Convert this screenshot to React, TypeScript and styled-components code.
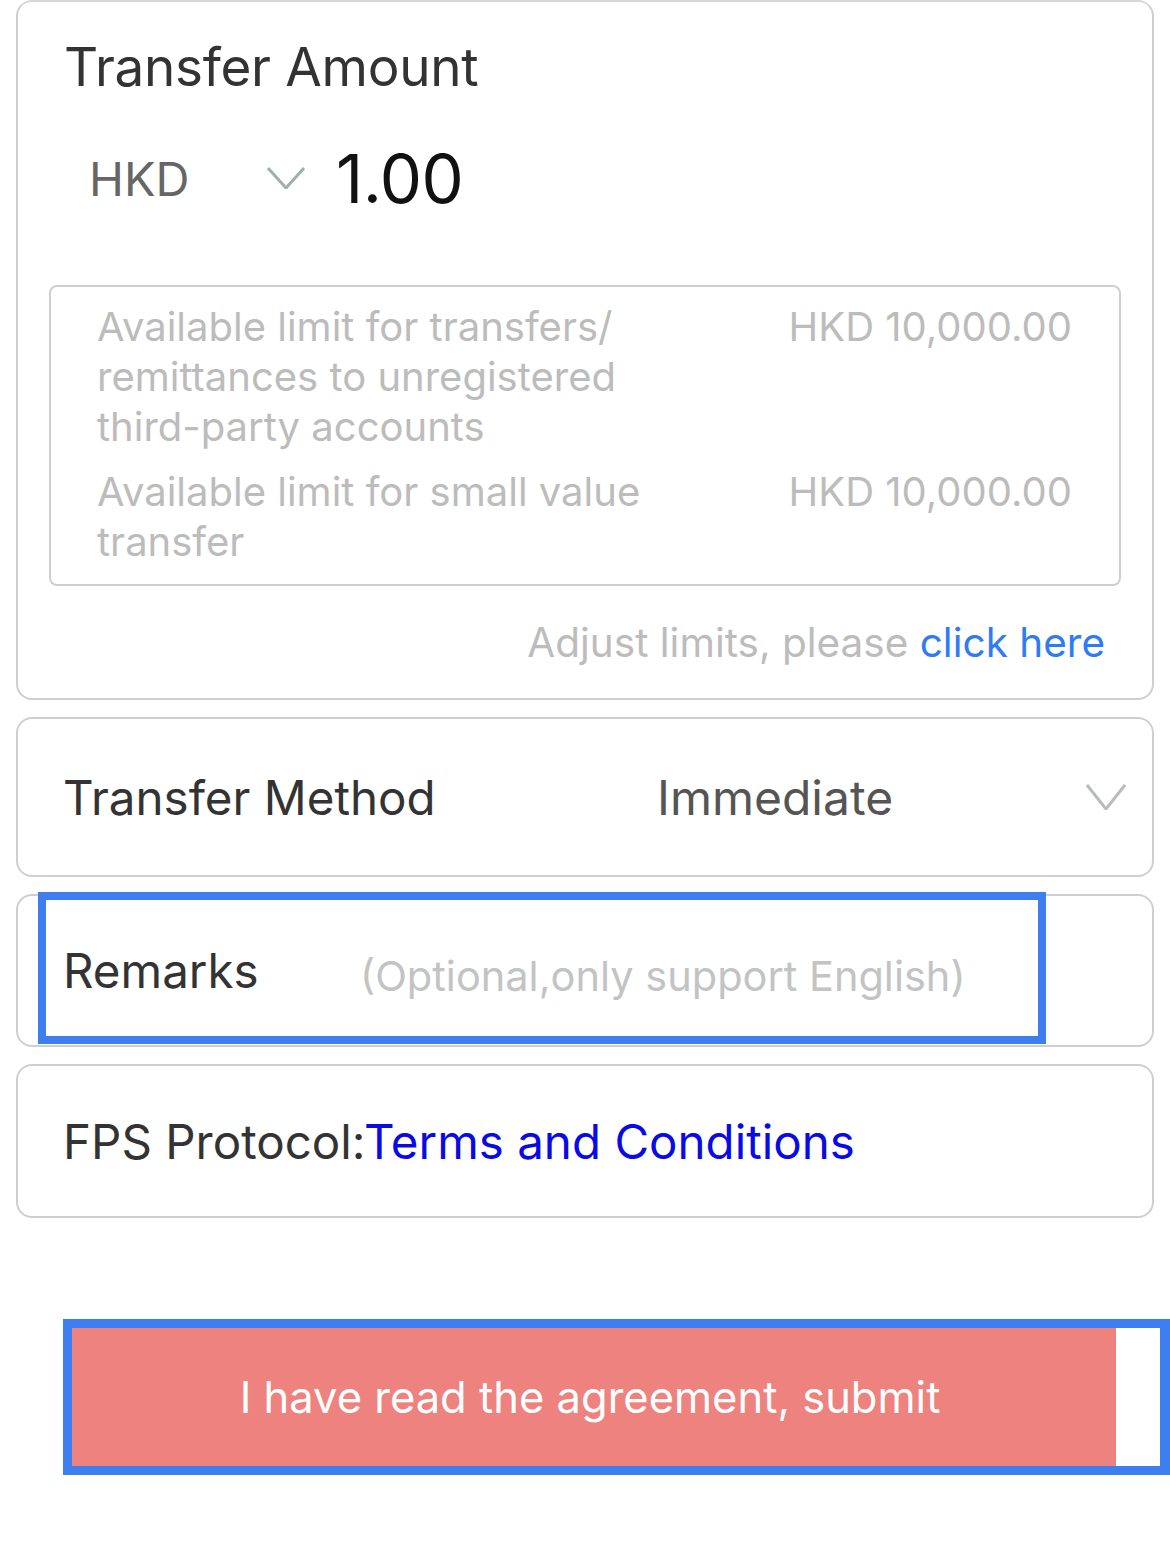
import React from "react";
import styled, { createGlobalStyle } from "styled-components";

const Global = createGlobalStyle`
  html, body { margin: 0; padding: 0; background: #fff; }
  body { font-family: "Inter", "Noto Sans", sans-serif; -webkit-font-smoothing: antialiased; }
  * { box-sizing: border-box; }
`;

const Page = styled.div`
  width: 1170px;
  padding: 0 16px 0 16px;
  display: flex;
  flex-direction: column;
  gap: 17px;
`;

const Card = styled.div<{ $h?: number }>`
  position: relative;
  border: 2px solid #cfcfd2;
  border-radius: 16px;
  background: #fff;
  ${(p) => (p.$h ? `height: ${p.$h}px;` : "")}
`;

const AmountCard = styled(Card)`
  padding: 30px 47px 30px 31px;
  border-top-color: #d8d8da;
`;

const Title = styled.div`
  font-size: 53px;
  line-height: 70px;
  color: #333;
  padding-left: 15px;
  letter-spacing: -0.3px;
`;

const CurrencyRow = styled.div`
  display: flex;
  align-items: center;
  height: 90px;
  margin-top: 31px;
  padding-left: 40px;
`;

const Currency = styled.span`
  font-size: 47px;
  color: #666;
  width: 178px;
`;

const Amount = styled.span`
  font-size: 67px;
  color: #111;
  margin-left: 31px;
  letter-spacing: -0.5px;
`;

const LimitBox = styled.div`
  margin-top: 62px;
  margin-right: -16px;
  border: 2px solid #cfcfd2;
  border-radius: 8px;
  padding: 15px 47px 17px 46px;
  display: flex;
  flex-direction: column;
  gap: 15px;
`;

const LimitRow = styled.div`
  display: flex;
  justify-content: space-between;
  align-items: flex-start;
  font-size: 40px;
  line-height: 50px;
  color: #bcbcbc;
`;

const LimitLabel = styled.span`
  width: 600px;
`;

const Adjust = styled.div`
  margin-top: 32px;
  text-align: right;
  font-size: 40.5px;
  line-height: 50px;
  color: #bcbcbc;
`;

const Link = styled.span<{ $c: string }>`
  color: ${(p) => p.$c};
`;

const Row = styled(Card)`
  display: flex;
  align-items: center;
  padding: 0 26px 0 45px;
`;

const Label = styled.span<{ $w?: number }>`
  font-size: 47.5px;
  color: #333;
  ${(p) => (p.$w ? `width: ${p.$w}px; flex: none;` : "")}
`;

const Value = styled.span`
  flex: 1;
  font-size: 48px;
  color: #555;
`;

const Placeholder = styled.span`
  font-size: 41.5px;
  color: #c2c4c4;
  margin-top: 10px;
`;

const Highlight = styled.div`
  position: absolute;
  left: 20px;
  top: -4px;
  width: 1008px;
  height: 152px;
  border: 8px solid #3d7ef0;
  pointer-events: none;
`;

const ButtonArea = styled.div`
  margin-top: 84px;
  margin-left: 47px;
  margin-right: -16px;
  border: 9px solid #3d7ef0;
  border-right-width: 10px;
  padding-right: 44px;
  background: #fff;
`;

const SubmitButton = styled.button`
  display: block;
  width: 100%;
  height: 138px;
  border: none;
  background: #ee827e;
  color: #fff;
  font-family: inherit;
  font-size: 43.5px;
  padding: 0 8px 0 0;
`;

const Chevron = ({ w, h, color, sw }: { w: number; h: number; color: string; sw: number }) => (
  <svg width={w} height={h} viewBox={`0 0 ${w} ${h}`} fill="none">
    <polyline points={`1,1 ${w / 2},${h - 1} ${w - 1},1`} stroke={color} strokeWidth={sw} />
  </svg>
);

export default function App() {
  return (
    <>
      <Global />
      <Page>
        <AmountCard>
          <Title>Transfer Amount</Title>
          <CurrencyRow>
            <Currency>HKD</Currency>
            <Chevron w={38} h={22} color="#9fb0ad" sw={3} />
            <Amount>1.00</Amount>
          </CurrencyRow>
          <LimitBox>
            <LimitRow>
              <LimitLabel>Available limit for transfers/ remittances to unregistered third-party accounts</LimitLabel>
              <span>HKD 10,000.00</span>
            </LimitRow>
            <LimitRow>
              <LimitLabel>Available limit for small value transfer</LimitLabel>
              <span>HKD 10,000.00</span>
            </LimitRow>
          </LimitBox>
          <Adjust>
            Adjust limits, please <Link $c="#2f7bf5">click here</Link>
          </Adjust>
        </AmountCard>

        <Row $h={160}>
          <Label $w={594}>Transfer Method</Label>
          <Value>Immediate</Value>
          <Chevron w={40} h={26} color="#b9bcbc" sw={3} />
        </Row>

        <Row $h={153}>
          <Label $w={297}>Remarks</Label>
          <Placeholder>(Optional,only support English)</Placeholder>
          <Highlight />
        </Row>

        <Row $h={154}>
          <Label>
            FPS Protocol:<Link $c="#0a0ae6">Terms and Conditions</Link>
          </Label>
        </Row>

        <ButtonArea>
          <SubmitButton>I have read the agreement, submit</SubmitButton>
        </ButtonArea>
      </Page>
    </>
  );
}
